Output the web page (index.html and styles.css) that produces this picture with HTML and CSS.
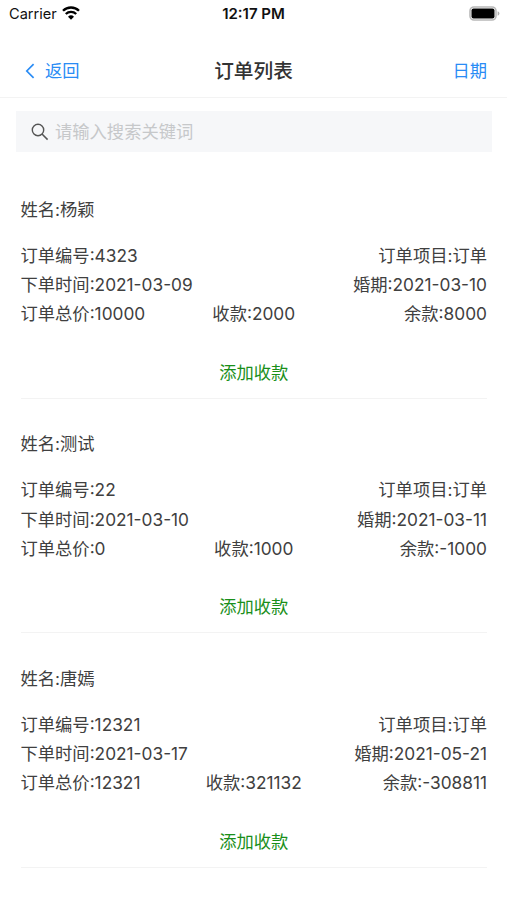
FILE: index.html
```html
<!DOCTYPE html>
<html lang="zh-CN">
<head>
<meta charset="utf-8">
<title>订单列表</title>
<link rel="stylesheet" href="styles.css">
</head>
<body>
<div class="status">
  <div class="carrier"><span>Carrier</span>
    <svg class="wifi" width="18" height="14" viewBox="0 0 18 14"><path d="M1 4.8a11.3 11.3 0 0 1 16 0M3.8 8a7.4 7.4 0 0 1 10.4 0" fill="none" stroke="#000" stroke-width="2.3"/><path d="M9 13.7 6 10.7a4.3 4.3 0 0 1 6 0z"/></svg>
  </div>
  <div class="clock">12:17 PM</div>
  <svg class="battery" width="31" height="15" viewBox="0 0 31 15"><rect x="1" y="1" width="26" height="13" rx="4" fill="#fff" stroke="#b8b8b8" stroke-width="1.6"/><rect x="2.5" y="2.5" width="23" height="10" rx="2"/><path d="M28.6 5.2q1.8.6 1.8 2.3t-1.8 2.3z" fill="#b0b0b0"/></svg>
</div>
<header class="nav">
  <a class="back"><svg width="10" height="16" viewBox="0 0 10 16"><path d="M8.6 1.2 1.8 8l6.8 6.8" fill="none" stroke="#2a8cf5" stroke-width="1.7"/></svg><span>返回</span></a>
  <h1>订单列表</h1>
  <a class="date">日期</a>
</header>
<div class="search"><svg width="18" height="18" viewBox="0 0 18 18"><circle cx="7" cy="7" r="5.7" fill="none" stroke="#555" stroke-width="1.4"/><path d="m11 11 5.6 5.6" stroke="#555" stroke-width="1.5"/></svg><span>请输入搜索关键词</span></div>
<main>
  <section class="order">
    <div class="name">姓名:杨颖</div>
    <div class="row"><span>订单编号:4323</span><span>订单项目:订单</span></div>
    <div class="row"><span>下单时间:2021-03-09</span><span>婚期:2021-03-10</span></div>
    <div class="row"><span>订单总价:10000</span><span>收款:2000</span><span>余款:8000</span></div>
    <div class="add">添加收款</div>
  </section>
  <section class="order">
    <div class="name">姓名:测试</div>
    <div class="row"><span>订单编号:22</span><span>订单项目:订单</span></div>
    <div class="row"><span>下单时间:2021-03-10</span><span>婚期:2021-03-11</span></div>
    <div class="row"><span>订单总价:0</span><span>收款:1000</span><span>余款:-1000</span></div>
    <div class="add">添加收款</div>
  </section>
  <section class="order">
    <div class="name">姓名:唐嫣</div>
    <div class="row"><span>订单编号:12321</span><span>订单项目:订单</span></div>
    <div class="row"><span>下单时间:2021-03-17</span><span>婚期:2021-05-21</span></div>
    <div class="row"><span>订单总价:12321</span><span>收款:321132</span><span>余款:-308811</span></div>
    <div class="add">添加收款</div>
  </section>
</main>
</body>
</html>
```
FILE: styles.css
```css
* { box-sizing: border-box; }
body {
  margin: 0;
  height: 900px;
  overflow: hidden;
  background: #fff;
  color: #404040;
  font-family: Inter, "Noto Sans CJK SC", sans-serif;
  font-size: 17.3px;
}
.status {
  display: grid;
  grid-template-columns: 1fr auto 1fr;
  align-items: center;
  height: 27px;
  padding: 0 7px 0 9px;
  color: #111;
  font-size: 14.6px;
}
.carrier { display: flex; align-items: center; gap: 5px; }
.wifi { margin-top: -2px; }
.clock { margin-right: 2px; font-weight: 600; font-size: 15px; }
.battery { justify-self: end; }
.nav {
  display: grid;
  grid-template-columns: 1fr auto 1fr;
  align-items: center;
  height: 71px;
  padding: 15px 20px 0 25px;
  border-bottom: 1px solid #f3f3f3;
  color: #2a8cf5;
}
.back { display: flex; align-items: center; gap: 10px; }
.back svg { margin-top: 2px; }
.nav h1 {
  margin: 0 5px 0 0;
  color: #333;
  font-size: 19.7px;
  font-weight: 500;
}
.date { justify-self: end; }
.search {
  display: flex;
  align-items: center;
  gap: 6px;
  height: 41px;
  margin: 13px 15px 0 16px;
  padding: 0 0 2px 15px;
  background: #f6f7f9;
  color: #c6c8ca;
}
.search svg { margin-top: 2px; }
main { padding: 12px 20px 0 20.5px; }
.order {
  height: 234.5px;
  padding-top: 30.6px;
  border-bottom: 1px solid #f3f3f3;
  line-height: 29.3px;
}
.name { margin-bottom: 17px; }
.row { display: flex; }
.row span { flex: 1; text-align: center; white-space: nowrap; }
.row span:first-child { text-align: left; }
.row span:last-child { text-align: right; }
.add { margin-top: 29px; text-align: center; color: #1a8f1a; }
```
